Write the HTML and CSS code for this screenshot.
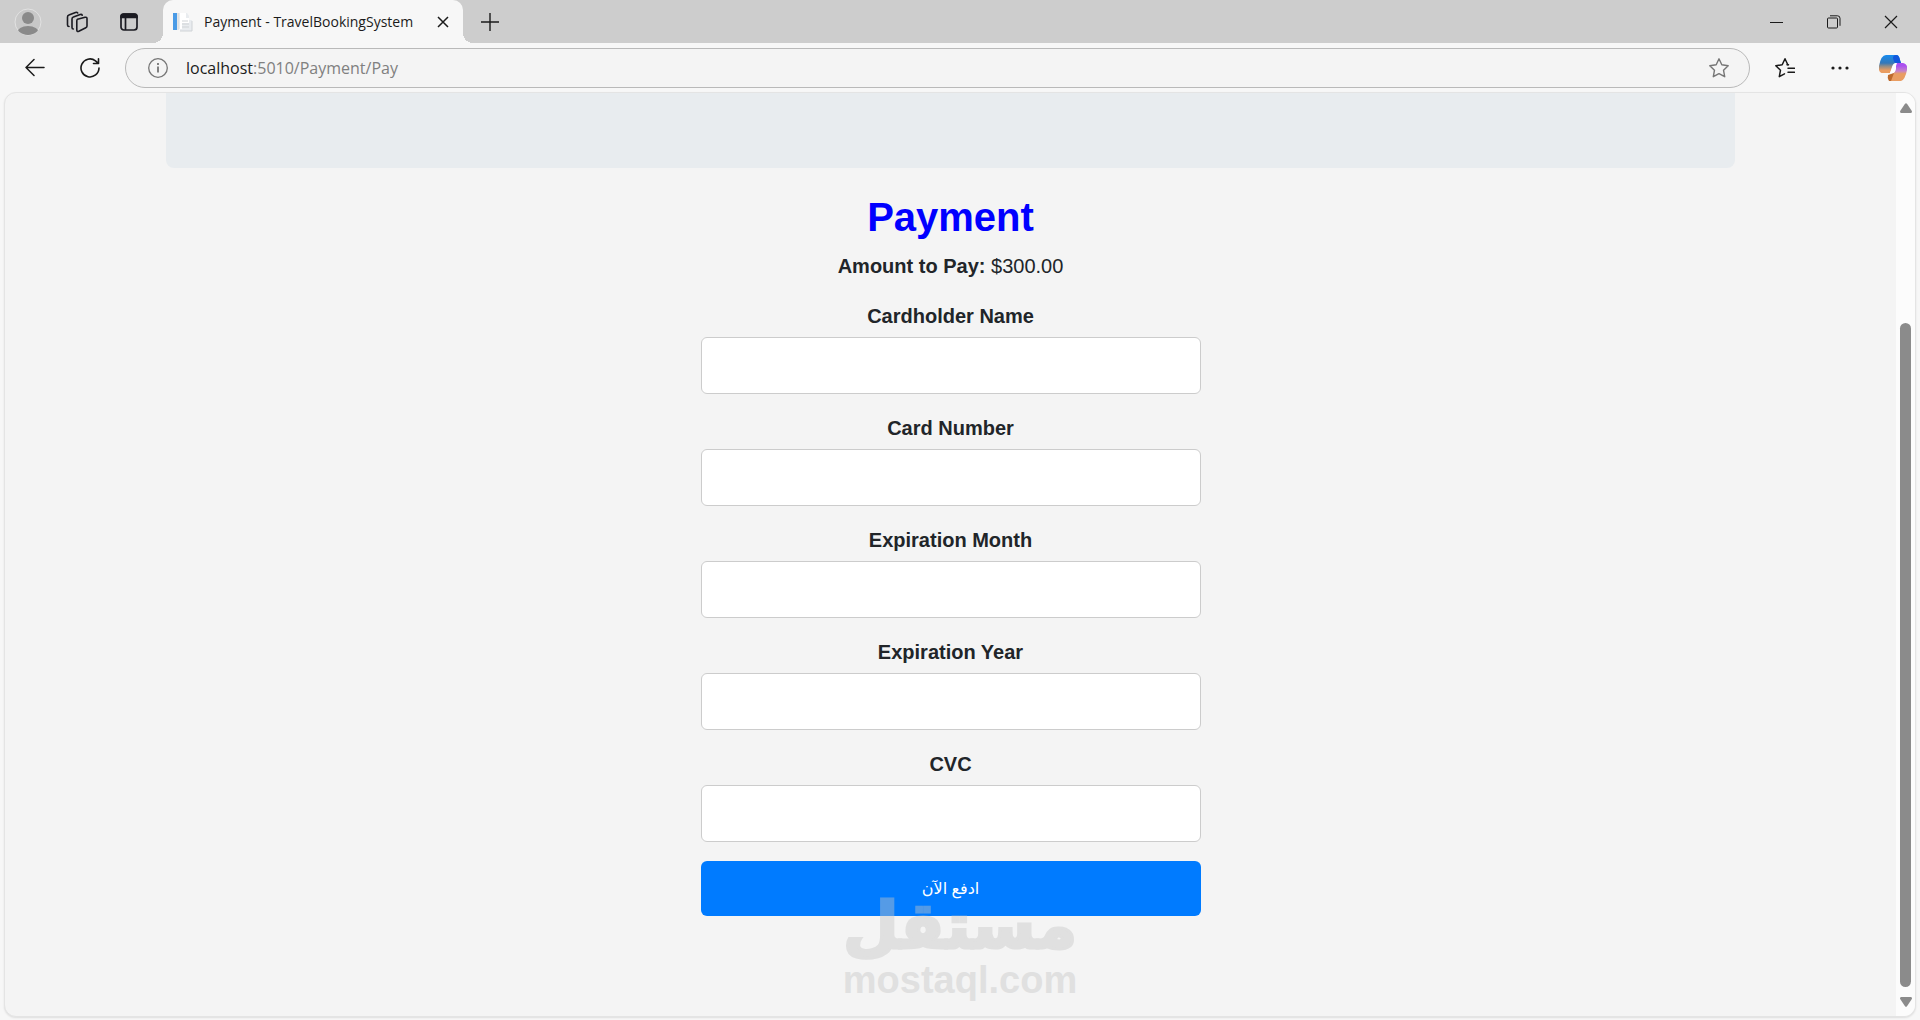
FILE: index.html
```html
<!DOCTYPE html>
<html lang="en">
<head>
    <meta charset="UTF-8">
    <meta name="viewport" content="width=device-width, initial-scale=1.0">
    <title>Payment - TravelBookingSystem</title>
    <link rel="stylesheet" href="styles.css">
</head>
<body>
    <header class="browser">
        <div class="tab-bar">
            <div class="tab-tools">
                <button class="icon-button" aria-label="Profile">
                    <svg width="28" height="28" viewBox="0 0 28 28">
                        <defs>
                            <clipPath id="avatar"><circle cx="14" cy="14" r="13"/></clipPath>
                        </defs>
                        <circle cx="14" cy="14" r="13" fill="#c8c8c8" stroke="#e2e2e2"/>
                        <g fill="#8a8a8a" clip-path="url(#avatar)">
                            <circle cx="14" cy="10" r="6"/>
                            <ellipse cx="14" cy="25" rx="11" ry="7"/>
                        </g>
                    </svg>
                </button>
                <button class="icon-button" aria-label="Workspaces">
                    <svg width="22" height="22" viewBox="0 0 22 22" fill="none" stroke="#1b1b22" stroke-width="1.6" stroke-linejoin="round" stroke-linecap="round">
                        <path d="M11.500 8.300l7.500-2q2-.5 2 1.300v7.500q0 1.200-1.200 1.600l-7 3.500q-2 .8-2-1.200v-9q0-1.300 .7-1.700z"/>
                        <path d="M7.300 18q-1.300 0-1.300-1.600V8q0-1.500 1.400-1.900l6.800-2.600q1.500-.4 2 .7"/>
                        <path d="M3 15.500q-1.500 0-1.500-1.600V6q0-1.600 1.400-2l6.600-2.600q1.500-.4 2.200.6"/>
                    </svg>
                </button>
                <button class="icon-button tab-actions" aria-label="Tab actions">
                    <svg width="18" height="18" viewBox="0 0 18 18" fill="none" stroke="#1b1b22" stroke-width="1.700">
                        <rect x="1" y="1" width="16" height="16" rx="3"/>
                        <path d="M1 4.500V3.500Q1 1 3.500 1h11Q17 1 17 3.500v1z" fill="#1b1b22"/>
                        <path d="M5.500 5v12"/>
                    </svg>
                </button>
            </div>
            <div class="tab">
                <svg width="20" height="20" viewBox="0 0 20 20">
                    <path d="M0 1h4v17H0z" fill="#4a9be6"/>
                    <path d="M5 1h9l2 3v4h3v11H7V17H5z" fill="#e9ecef"/>
                    <path d="M7 1h6v5h3v5H9v6H7z" fill="#fff"/>
                    <path d="M5 1v17M7 19h12V9M9 9h6M9 12h7M9 15h7" fill="none" stroke="#cfd3d6"/>
                </svg>
                <span class="tab-title">Payment - TravelBookingSystem</span>
                <button class="icon-button" aria-label="Close tab">
                    <svg width="12" height="12" viewBox="0 0 12 12" stroke="#1b1b1b" stroke-width="1.500">
                        <path d="M1 1l10 10M11 1L1 11"/>
                    </svg>
                </button>
            </div>
            <button class="icon-button new-tab" aria-label="New tab">
                <svg width="18" height="18" viewBox="0 0 18 18" stroke="#1b1b1b" stroke-width="1.400">
                    <path d="M9 0v18M0 9h18"/>
                </svg>
            </button>
            <div class="window-buttons">
                <button class="icon-button" aria-label="Minimize">
                    <svg width="14" height="14" viewBox="0 0 14 14" stroke="#1b1b1b"><path d="M0 7.500h13"/></svg>
                </button>
                <button class="icon-button" aria-label="Restore">
                    <svg width="14" height="14" viewBox="0 0 14 14" fill="none" stroke="#1b1b1b">
                        <rect x=".5" y="3" width="10" height="10" rx="1"/>
                        <path d="M3 .8h7.500q2.500 0 2.500 2.500v7.500"/>
                    </svg>
                </button>
                <button class="icon-button" aria-label="Close window">
                    <svg width="14" height="14" viewBox="0 0 14 14" stroke="#1b1b1b" stroke-width="1.200"><path d="M1 1l12 12M13 1L1 13"/></svg>
                </button>
            </div>
        </div>

        <div class="toolbar">
            <button class="icon-button" aria-label="Back">
                <svg width="20" height="20" viewBox="0 0 20 20" fill="none" stroke="#1b1b1b" stroke-width="1.500" stroke-linecap="round" stroke-linejoin="round">
                    <path d="M19 9.500H1M9 1.500l-8 8 8 8"/>
                </svg>
            </button>
            <button class="icon-button reload" aria-label="Refresh">
                <svg width="20" height="20" viewBox="0 0 20 20" fill="none" stroke="#1b1b1b" stroke-width="1.600" stroke-linecap="round" stroke-linejoin="round">
                    <path d="M19 10a9 9 0 1 1-3.500-7.200L18.500 5.500M18.500.8v4.700h-5"/>
                </svg>
            </button>
            <div class="address-bar">
                <svg width="20" height="20" viewBox="0 0 20 20" fill="none" stroke="#767676" stroke-width="1.300">
                    <circle cx="10" cy="10" r="9.300"/>
                    <path d="M10 8.500v6M10 5v2" stroke-width="1.800"/>
                </svg>
                <span class="url"><span class="host">localhost</span>:5010/Payment/Pay</span>
                <button class="icon-button" aria-label="Add to favorites">
                    <svg width="20" height="20" viewBox="0 0 20 20" fill="none" stroke="#767676" stroke-width="1.400" stroke-linejoin="round">
                        <path d="M10 .8l2.800 6 6.400.9-4.700 4.500 1.200 6.500L10 15.600l-5.700 3.100 1.200-6.500L.8 7.700l6.400-.9z"/>
                    </svg>
                </button>
            </div>
            <button class="icon-button favorites" aria-label="Favorites">
                <svg width="20" height="20" viewBox="0 0 20 20" fill="none" stroke="#1b1b1b" stroke-width="1.500" stroke-linejoin="round" stroke-linecap="round">
                    <path d="M9.500 15.800l-5.200 2.900 1.200-6.500L.8 7.700l6.400-.9L10 .8l2.800 6"/>
                    <path d="M13 10.300h6.500M13 14.300h6.500M12 6.800l1.500 0"/>
                </svg>
            </button>
            <button class="icon-button more" aria-label="Settings and more">
                <svg width="18" height="20" viewBox="0 0 18 20" fill="#1b1b1b">
                    <circle cx="2" cy="10" r="1.600"/><circle cx="9" cy="10" r="1.600"/><circle cx="16" cy="10" r="1.600"/>
                </svg>
            </button>
            <button class="icon-button" aria-label="Copilot">
                <svg width="28" height="26" viewBox="0 0 28 26">
                    <defs>
                        <linearGradient id="left" x2="0" y2="1">
                            <stop offset="0" stop-color="#168bf0"/>
                            <stop offset=".45" stop-color="#3578b8"/>
                            <stop offset=".62" stop-color="#8f8c88"/>
                            <stop offset=".85" stop-color="#e99d62"/>
                        </linearGradient>
                        <linearGradient id="right" x2="0" y2="1">
                            <stop offset=".15" stop-color="#aa4ff0"/>
                            <stop offset=".45" stop-color="#c684c8"/>
                            <stop offset=".6" stop-color="#e99d62"/>
                        </linearGradient>
                    </defs>
                    <path d="M7 0h11q2 0 3 5l1 3h-5q-3 0-4 4l-2 6H4q-5 0-4-7Q2 0 7 0z" fill="url(#left)"/>
                    <path d="M17 0q3 0 4 5l1 3h-5q-2 0-3-5 0-3 3-3z" fill="#1258dc"/>
                    <path d="M18 8h6q5 1 4 7-2 10-6 11H12q-3 0-3-5l4-2q2 0 3-5z" fill="url(#right)"/>
                    <path d="M10 26q-2-3-1-6l6-2-3 8z" fill="#bd6a2c"/>
                    <path d="M17 8q-3 1-4 5l-2 5h3q2 0 3-4z" fill="#fff"/>
                </svg>
            </button>
        </div>
    </header>

    <div class="viewport">
        <main class="page">
            <div class="hero"></div>
            <h1>Payment</h1>
            <p class="amount"><strong>Amount to Pay:</strong> $300.00</p>
            <form class="payment-form">
                <div class="form-group">
                    <label for="cardholder">Cardholder Name</label>
                    <input type="text" id="cardholder">
                </div>
                <div class="form-group">
                    <label for="cardNumber">Card Number</label>
                    <input type="text" id="cardNumber">
                </div>
                <div class="form-group">
                    <label for="expMonth">Expiration Month</label>
                    <input type="text" id="expMonth">
                </div>
                <div class="form-group">
                    <label for="expYear">Expiration Year</label>
                    <input type="text" id="expYear">
                </div>
                <div class="form-group">
                    <label for="cvc">CVC</label>
                    <input type="text" id="cvc">
                </div>
                <button type="submit" class="pay-button" lang="ar" dir="rtl">ادفع الآن</button>
            </form>
        </main>
        <div class="scrollbar">
            <svg width="12" height="10" viewBox="0 0 12 10" fill="#8b8b8b"><path d="M5 .7q1-1 2 0l5 7.500Q12 10 11 10H1Q0 10 0 8.200z"/></svg>
            <div class="thumb"></div>
            <svg width="12" height="10" viewBox="0 0 12 10" fill="#8b8b8b"><path d="M5 9.300q1 1 2 0l5-7.500Q12 0 11 0H1Q0 0 0 1.800z"/></svg>
        </div>
    </div>

    <div class="watermark">
        <span class="watermark-name" lang="ar" dir="rtl">مستقل</span>
        <span class="watermark-site">mostaql.com</span>
    </div>
</body>
</html>
```
FILE: styles.css
```css
* {
    box-sizing: border-box;
}

body {
    margin: 0;
    height: 100vh;
    display: flex;
    flex-direction: column;
    overflow: hidden;
    position: relative;
    background-color: #f7f7f7;
    color: #212529;
    font-family: "Liberation Sans", Arial, sans-serif;
    font-size: 20px;
}

.icon-button {
    display: flex;
    padding: 0;
    border: none;
    background: none;
    cursor: pointer;
}

svg {
    display: block;
    flex: none;
}

/* Browser bars */
.browser {
    font-family: "Open Sans", "Noto Sans", sans-serif;
}

.tab-bar {
    display: flex;
    align-items: center;
    height: 43px;
    background-color: #cdcdcd;
}

.tab-tools {
    display: flex;
    align-items: center;
    gap: 24px;
    padding: 0 25px 0 14px;
}

.tab-actions {
    margin-left: 8px;
}

.tab {
    position: relative;
    display: flex;
    align-items: center;
    gap: 11px;
    width: 300px;
    height: 43px;
    padding: 0 14px 0 10px;
    background-color: #f7f7f7;
    border-radius: 10px 10px 0 0;
}

/* curved feet of the active tab */
.tab::before,
.tab::after {
    content: "";
    position: absolute;
    bottom: 0;
    width: 10px;
    height: 10px;
}

.tab::before {
    right: 100%;
    background: radial-gradient(circle at 0 0, #cdcdcd 10px, #f7f7f7 10px);
}

.tab::after {
    left: 100%;
    background: radial-gradient(circle at 100% 0, #cdcdcd 10px, #f7f7f7 10px);
}

.tab-title {
    flex: 1;
    font-size: 14px;
    color: #1b1b1b;
    white-space: nowrap;
}

.new-tab {
    margin-left: 18px;
}

.window-buttons {
    display: flex;
    gap: 43px;
    margin-left: auto;
    padding-right: 22px;
}

.toolbar {
    display: flex;
    align-items: center;
    height: 49px;
    padding: 0 13px 0 25px;
}

.reload {
    margin: 0 25px 0 35px;
}

.address-bar {
    flex: 1;
    display: flex;
    align-items: center;
    gap: 18px;
    height: 40px;
    padding: 0 20px 0 22px;
    background-color: #f4f4f4;
    border: 1px solid #b9b9b9;
    border-radius: 20px;
}

.url {
    flex: 1;
    font-size: 16px;
    color: #808080;
}

.host {
    color: #1b1b1b;
}

.favorites {
    margin-left: 25px;
}

.more {
    margin: 0 30px 0 36px;
}

/* Page */
.viewport {
    flex: 1;
    display: flex;
    min-height: 0;
    margin: 0 4px 3px;
    border: 1px solid #e4e4e4;
    border-radius: 12px;
    overflow: hidden;
    background-color: #f4f4f4;
    box-shadow: 0 1px 2px rgba(0, 0, 0, 0.1);
}

.page {
    flex: 1;
    display: flex;
    flex-direction: column;
    align-items: center;
    text-align: center;
    line-height: 30px;
}

.hero {
    width: 83%;
    height: 75px;
    background-color: #e8ecef;
    border-radius: 0 0 8px 8px;
}

h1 {
    margin: 25px 0 10px;
    font-size: 40px;
    line-height: 48px;
    color: #0000ff;
}

.amount {
    margin: 0 0 20px;
}

.payment-form {
    width: 100%;
    max-width: 500px;
}

.form-group {
    margin-bottom: 19px;
}

.form-group label {
    display: block;
    margin-bottom: 6px;
    font-weight: bold;
}

.form-group input {
    display: block;
    width: 100%;
    height: 57px;
    padding: 12px;
    border: 1px solid #cccccc;
    border-radius: 6px;
    background-color: #fff;
    font: inherit;
}

.pay-button {
    display: block;
    width: 100%;
    height: 55px;
    border: none;
    border-radius: 6px;
    background-color: #007bff;
    color: #fff;
    font-family: "Liberation Sans", "DejaVu Sans", sans-serif;
    font-size: 16px;
    cursor: pointer;
}

.scrollbar {
    display: flex;
    flex-direction: column;
    align-items: center;
    gap: 10px;
    width: 19px;
    padding: 10px 0 9px;
    background-color: #fcfcfc;
}

.thumb {
    width: 11px;
    height: 73.5%;
    margin-top: auto;
    border-radius: 6px;
    background-color: #8b8b8b;
}

.watermark {
    position: absolute;
    left: 0;
    right: 0;
    bottom: 18px;
    display: flex;
    flex-direction: column;
    align-items: center;
    font-weight: bold;
    color: #c6c6c6;
    opacity: 0.43;
    pointer-events: none;
}

.watermark-name {
    font-family: "DejaVu Sans", sans-serif;
    font-size: 64px;
    line-height: 64px;
    -webkit-text-stroke: 3px #c6c6c6;
}

.watermark-site {
    font-size: 38px;
    line-height: 44px;
}
```
